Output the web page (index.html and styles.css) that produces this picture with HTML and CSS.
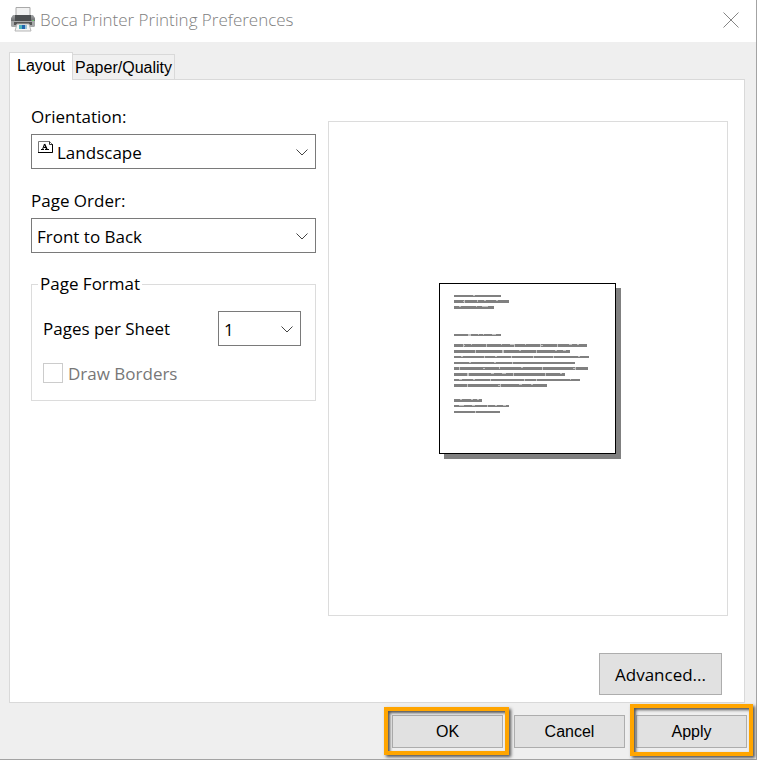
FILE: index.html
```html
<!DOCTYPE html>
<html lang="en">
<head>
<meta charset="utf-8">
<title>Boca Printer Printing Preferences</title>
<link rel="stylesheet" href="styles.css">
</head>
<body>
<main class="dialog">
  <header class="titlebar">
    <svg class="printer" width="26" height="26" viewBox="0 0 26 26" aria-hidden="true">
      <defs>
        <linearGradient id="body" x1="0" y1="0" x2="0" y2="1">
          <stop offset="0" stop-color="#a5a7a9"/><stop offset=".5" stop-color="#6b6e70"/><stop offset="1" stop-color="#a5a7a8"/>
        </linearGradient>
      </defs>
      <path d="M6 .5h14V10H6z" fill="#f1f1f1" stroke="#a9a9a9"/>
      <path d="M3 8h2v4h16V8h2l2 3v7q0 2-2 2H3q-2 0-2-2v-7z" fill="url(#body)"/>
      <path d="M5 8h16v6H5z" fill="#4c4f51"/>
      <path d="M1 14h24v4q0 2-2 2H3q-2 0-2-2z" fill="#a6a8a9"/>
      <path d="M4 15h18v3H4z" fill="#565656"/>
      <path d="M22 13h2v1h-2z" fill="#69c46a"/>
      <path d="M7 17h12l2 7H5z" fill="#f4f4f4" stroke="#b5b5b5"/>
      <path d="M9 18h3v4H9z" fill="#4eb3bd"/><path d="M12 18h3v4h-3z" fill="#2265ae"/><path d="M15 18h2v4h-2z" fill="#9bc4d8"/>
    </svg>
    <h1 class="title">Boca Printer Printing Preferences</h1>
    <button class="close" type="button" aria-label="Close">
      <svg width="16" height="16" viewBox="0 0 16 16" aria-hidden="true"><path d="M.5.5l15 15M15.500.5l-15 15" stroke="#858585" fill="none"/></svg>
    </button>
  </header>

  <nav class="tabs" role="tablist">
    <button class="tab tab-active" type="button" role="tab" aria-selected="true">Layout</button>
    <button class="tab" type="button" role="tab" aria-selected="false">Paper/Quality</button>
  </nav>

  <section class="panel">
    <div class="columns">
      <div class="settings">
        <label class="label" for="orientation">Orientation:</label>
        <div class="combo combo-icon">
          <svg class="page-icon" width="15" height="12" viewBox="0 0 15 12" aria-hidden="true">
            <path d="M.5.5h11l3 3v8H.5z" fill="#fff" stroke="#777"/>
            <path d="M0 11.500h14.500V3" fill="none" stroke="#000"/>
            <path d="M11.500.5v3h3" fill="none" stroke="#333"/>
            <path d="M3 8.500h3M7 8.500h4M4.500 8.500l2-5.500M5.500 6.500h3" fill="none" stroke="#000"/>
            <path d="M6.500 3l2.500 5.500" fill="none" stroke="#000" stroke-width="1.500"/>
          </svg>
          <select id="orientation"><option>Landscape</option><option>Portrait</option></select>
          <svg class="chevron" width="12" height="7" viewBox="0 0 12 7" aria-hidden="true"><path d="M.5.5L6 6 11.500.5"/></svg>
        </div>
        <label class="label label-next" for="order">Page Order:</label>
        <div class="combo">
          <select id="order"><option>Front to Back</option><option>Back to Front</option></select>
          <svg class="chevron" width="12" height="7" viewBox="0 0 12 7" aria-hidden="true"><path d="M.5.5L6 6 11.500.5"/></svg>
        </div>
        <fieldset class="group">
          <legend>Page Format</legend>
          <div class="row">
            <label for="sheets">Pages per Sheet</label>
            <div class="combo combo-small">
              <select id="sheets"><option>1</option><option>2</option><option>4</option></select>
              <svg class="chevron" width="12" height="7" viewBox="0 0 12 7" aria-hidden="true"><path d="M.5.5L6 6 11.500.5"/></svg>
            </div>
          </div>
          <label class="check"><input type="checkbox" disabled>Draw Borders</label>
        </fieldset>
      </div>
      <div class="preview">
        <svg width="182" height="176" viewBox="0 0 182 176" shape-rendering="crispEdges" role="img" aria-label="Page preview">
          <path d="M5 5h177v171H5z" fill="#808080"/>
          <path d="M.5.500h176v170H.5z" fill="#fff" stroke="#000"/>
          <path fill="#808080" d="M15 12h47v2H15zM15 17h55v3H15zM15 23h40v3H15zM15 51h47v2H15zM15 61h133v3H15zM15 67h116v3H15zM15 73h135v2H15zM15 79h121v2H15zM15 84h134v3H15zM15 90h111v3H15zM15 96h126v2H15zM15 101h93v3H15zM15 116h28v3H15zM15 122h55v2H15zM15 128h46v2H15z"/>
          <path fill="#c4c4c4" d="M34 12h2v1h-2zM24 18h2v1h-2zM25 17h1v3h-1zM38 17h1v2h-1zM45 17h2v1h-2zM57 17h2v1h-2zM20 23h2v1h-2zM37 23h1v1h-1zM43 23h6v1h-6zM29 51h3v2h-3zM39 51h1v1h-1zM44 51h1v1h-1zM53 51h4v1h-4zM24 61h1v3h-1zM25 62h1v1h-1zM32 61h1v1h-1zM47 61h1v3h-1zM62 61h1v1h-1zM71 61h4v1h-4zM75 61h1v3h-1zM86 61h1v1h-1zM101 61h1v3h-1zM102 62h2v1h-2zM118 61h1v3h-1zM130 61h3v1h-3zM138 61h2v1h-2zM36 67h1v3h-1zM63 67h2v3h-2zM80 67h2v1h-2zM97 67h1v3h-1zM116 67h2v1h-2zM124 67h3v1h-3zM22 73h2v1h-2zM45 73h1v2h-1zM56 73h2v1h-2zM72 73h1v2h-1zM94 73h1v2h-1zM114 73h1v2h-1zM139 73h2v1h-2zM30 79h2v1h-2zM55 79h2v1h-2zM73 79h1v2h-1zM20 84h1v3h-1zM44 85h2v1h-2zM60 84h1v2h-1zM82 84h2v1h-2zM103 84h1v3h-1zM134 85h3v1h-3zM136 84h1v3h-1zM28 90h2v3h-2zM52 90h3v1h-3zM63 90h4v1h-4zM74 90h1v3h-1zM106 90h1v3h-1zM121 90h2v1h-2zM20 96h3v1h-3zM34 96h2v1h-2zM51 96h1v2h-1zM85 96h1v2h-1zM97 96h1v2h-1zM131 96h1v1h-1zM28 101h1v3h-1zM59 102h2v1h-2zM61 101h1v3h-1zM80 101h3v1h-3zM92 101h2v1h-2zM21 116h2v1h-2zM32 116h2v1h-2zM38 116h2v1h-2zM20 122h5v1h-5zM33 122h3v1h-3zM48 122h1v2h-1zM56 122h2v1h-2zM64 122h3v1h-3zM36 128h1v2h-1z"/>
        </svg>
      </div>
    </div>
    <button class="button button-advanced" type="button">Advanced...</button>
  </section>

  <footer class="actions">
    <div class="slot marked"><button class="button" type="button">OK</button></div>
    <div class="slot"><button class="button" type="button">Cancel</button></div>
    <div class="slot marked marked-tall"><button class="button" type="button">Apply</button></div>
  </footer>
</main>
</body>
</html>
```
FILE: styles.css
```css
* { box-sizing: border-box; }

body {
  margin: 0;
  color: #000;
  font: 17px/26px "Open Sans", "Noto Sans", sans-serif;
}

button, select, input { font: inherit; color: inherit; margin: 0; }

.dialog {
  display: flex;
  flex-direction: column;
  min-height: 100vh;
  background: #efefef;
  border: solid #a3a3a3;
  border-width: 0 1px 1px 0;
}

.titlebar {
  display: flex;
  align-items: center;
  height: 42px;
  padding: 0 17px 2px 10px;
  background: #fff;
}

.title {
  flex: 1;
  margin: 0 0 0 4px;
  color: #808080;
  font-size: 17px;
  font-weight: 300;
}

.close {
  display: flex;
  padding: 0;
  border: 0;
  background: none;
}

.tabs {
  display: flex;
  align-items: flex-end;
  margin: 10px 0 0 9px;
}

.tab {
  height: 25px;
  padding: 2px 2px 0;
  border: 1px solid #d9d9d9;
  border-width: 1px 1px 0 0;
  background: #f0f0f0;
  font: 16px/22px "Liberation Sans", Arial, sans-serif;
}

.tab-active {
  z-index: 1;
  height: 28px;
  margin-bottom: -1px;
  padding: 0 7px 2px;
  border-left-width: 1px;
  background: #fff;
}

.panel {
  display: flex;
  flex: 1;
  flex-direction: column;
  margin: 0 11px 0 9px;
  padding: 24px 16px 7px 21px;
  border: 1px solid #d9d9d9;
  background: #fff;
}

.columns {
  display: grid;
  flex: 1;
  grid-template-columns: 285px 1fr;
  gap: 12px;
}

.label { display: block; height: 30px; }
.label-next { margin-top: 19px; }

.combo { position: relative; }

.combo select {
  display: block;
  width: 100%;
  height: 35px;
  padding: 2px 5px 0;
  border: 1px solid #7a7a7a;
  border-radius: 0;
  background: #fff;
  appearance: none;
}

.combo-icon select { padding-left: 25px; }
.combo-small { width: 83px; }

.page-icon { position: absolute; top: 7px; left: 7px; }

.chevron {
  position: absolute;
  top: 15px;
  right: 8px;
  fill: none;
  stroke: #444;
  pointer-events: none;
}

.group {
  height: 130px;
  margin: 18px 0 0;
  padding: 14px 14px 0 11px;
  border: 1px solid #dcdcdc;
}

.group legend {
  margin-left: -5px;
  padding: 0 2px;
}

.row {
  display: flex;
  align-items: center;
  justify-content: space-between;
}

.check {
  display: flex;
  align-items: flex-start;
  gap: 5px;
  margin-top: 15px;
  color: #777;
}

.check input {
  width: 20px;
  height: 20px;
  margin-top: 2px;
  border: 1px solid #ccc;
  background: #fff;
  appearance: none;
}

.preview {
  display: flex;
  align-items: center;
  justify-content: center;
  margin-top: 17px;
  padding: 4px 0 0 4px;
  border: 1px solid #dcdcdc;
}

.button {
  width: 111px;
  height: 33px;
  padding: 0;
  border: 1px solid #adadad;
  background: #e1e1e1;
  font: 16px/24px "Liberation Sans", Arial, sans-serif;
}

.button-advanced {
  align-self: flex-end;
  width: 123px;
  height: 42px;
  margin: 37px 6px 0 0;
  padding-top: 2px;
  font: inherit;
}

.actions {
  display: flex;
  justify-content: flex-end;
  gap: 11px;
  padding: 12px 9px 11px;
}

.slot { position: relative; display: flex; }

/* Callout frame drawn over the button and its surroundings */
.marked::after {
  content: "";
  position: absolute;
  inset: -8px -6px -7px -8px;
  border: 4px solid #ffa500;
  box-shadow: 2px 2px 3px #555, inset 2px 2px 3px #555;
  pointer-events: none;
}

.marked-tall::after { inset: -11px -6px -8px -6px; }
```
